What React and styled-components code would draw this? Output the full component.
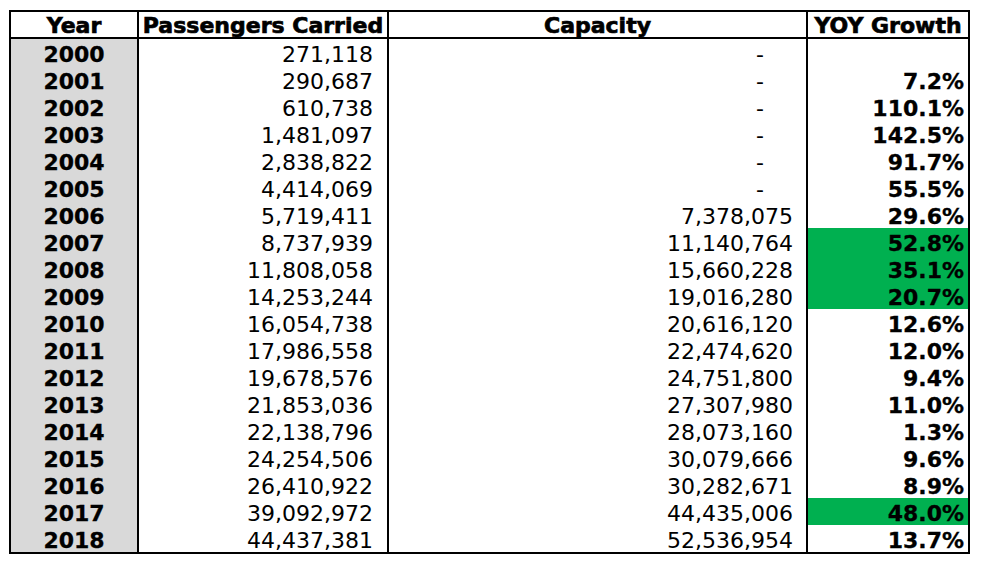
import React from "react";
import styled, { createGlobalStyle } from "styled-components";

const rows = [
  ["2000", "271,118", null, ""],
  ["2001", "290,687", null, "7.2%"],
  ["2002", "610,738", null, "110.1%"],
  ["2003", "1,481,097", null, "142.5%"],
  ["2004", "2,838,822", null, "91.7%"],
  ["2005", "4,414,069", null, "55.5%"],
  ["2006", "5,719,411", "7,378,075", "29.6%"],
  ["2007", "8,737,939", "11,140,764", "52.8%", true],
  ["2008", "11,808,058", "15,660,228", "35.1%", true],
  ["2009", "14,253,244", "19,016,280", "20.7%", true],
  ["2010", "16,054,738", "20,616,120", "12.6%"],
  ["2011", "17,986,558", "22,474,620", "12.0%"],
  ["2012", "19,678,576", "24,751,800", "9.4%"],
  ["2013", "21,853,036", "27,307,980", "11.0%"],
  ["2014", "22,138,796", "28,073,160", "1.3%"],
  ["2015", "24,254,506", "30,079,666", "9.6%"],
  ["2016", "26,410,922", "30,282,671", "8.9%"],
  ["2017", "39,092,972", "44,435,006", "48.0%", true],
  ["2018", "44,437,381", "52,536,954", "13.7%"],
];

const GlobalStyle = createGlobalStyle`
  body {
    margin: 0;
    background: #ffffff;
    font-family: "DejaVu Sans", Verdana, sans-serif;
    color: #000;
  }
`;

const Page = styled.div`
  padding: 10px 0 0 9px;
`;

const Sheet = styled.div`
  width: 957px;
  border: 2px solid #000;
  display: grid;
  grid-template-columns: 128px 250px 419px 160px;
`;

const HeadCell = styled.div`
  height: 27px;
  box-sizing: border-box;
  padding-top: 3px;
  line-height: 22px;
  font-size: 22px;
  font-weight: 700;
  -webkit-text-stroke: 0.7px #000;
  text-align: center;
  white-space: nowrap;
  border-bottom: 2px solid #000;
  border-right: ${(p) => (p.last ? "none" : "2px solid #000")};
`;

const Cell = styled.div`
  height: 27px;
  box-sizing: border-box;
  padding-top: 4px;
  line-height: 23px;
  font-size: 22px;
  white-space: nowrap;
  text-align: ${(p) => p.align || "right"};
  font-weight: ${(p) => (p.bold ? 700 : 400)};
  -webkit-text-stroke: ${(p) => (p.bold ? "0.3px #000" : "0")};
  padding-right: ${(p) => p.pr || 0}px;
  background: ${(p) => p.bg || "transparent"};
  border-right: ${(p) => (p.last ? "none" : "2px solid #000")};
`;

export default function App() {
  return (
    <Page>
      <GlobalStyle />
      <Sheet>
        <HeadCell>Year</HeadCell>
        <HeadCell>Passengers Carried</HeadCell>
        <HeadCell>Capacity</HeadCell>
        <HeadCell last>YOY Growth</HeadCell>
        {rows.map(([year, pax, cap, yoy, green]) => (
          <React.Fragment key={year}>
            <Cell align="center" bold bg="#d9d9d9">
              {year}
            </Cell>
            <Cell pr={14}>{pax}</Cell>
            <Cell pr={cap ? 13 : 42}>{cap || "-"}</Cell>
            <Cell last bold pr={4} bg={green ? "#00b050" : undefined}>
              {yoy}
            </Cell>
          </React.Fragment>
        ))}
      </Sheet>
    </Page>
  );
}
